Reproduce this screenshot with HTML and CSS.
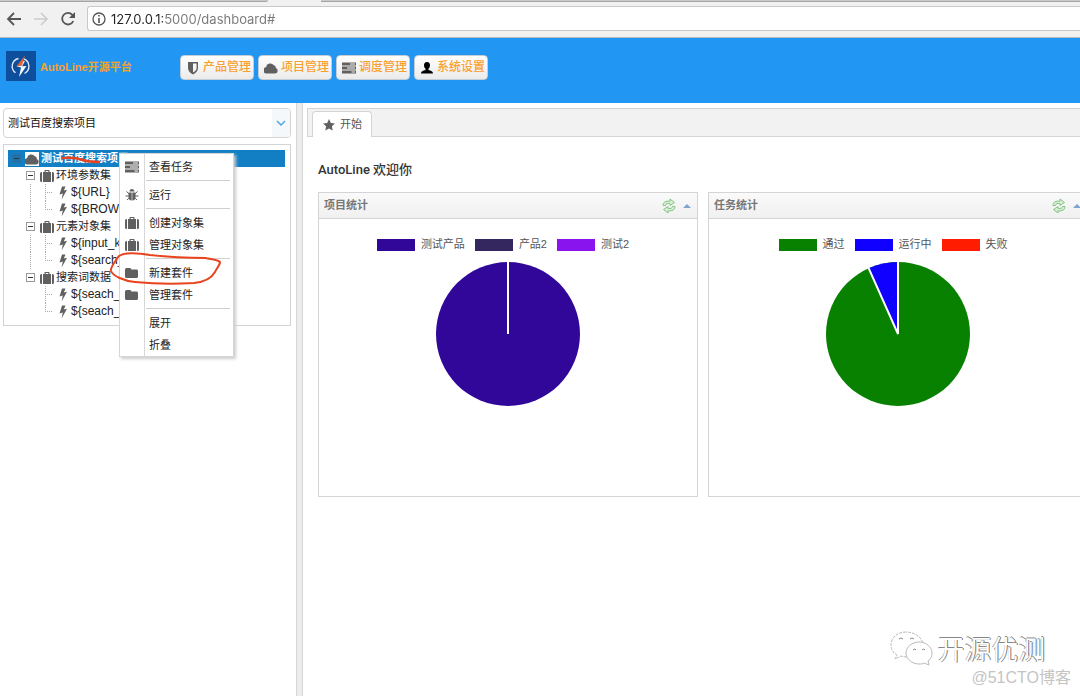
FILE: index.html
```html
<!DOCTYPE html>
<html lang="zh-CN">
<head>
<meta charset="utf-8">
<title>AutoLine开源平台</title>
<link rel="stylesheet" href="styles.css">
</head>
<body>
<svg class="defs" aria-hidden="true">
  <symbol id="i-shield" viewBox="0 0 14 14"><path fill-rule="evenodd" d="M2 1h10v6c0 3-2 5-5 6.500C4 12 2 10 2 7zM7 2.500V11.500c2.500-1.200 3.600-2.700 3.600-4.500V2.500z"/></symbol>
  <symbol id="i-cloud" viewBox="0 0 14 14"><path d="M3.200 12.500a3.200 3.200 0 0 1-1.200-6.300A4.300 4.300 0 0 1 9.800 4.300a2.600 2.600 0 0 1 2 2.800 2.800 2.800 0 0 1-.4 5.400z"/></symbol>
  <symbol id="i-tasks" viewBox="0 0 14 14"><path fill-rule="evenodd" d="M0 1.500h14v3H0zM8 2.500v1h5v-1zM0 5.500h14v3H0zM5 6.500v1h8v-1zM0 9.500h14v3H0zM9.500 10.500v1H13v-1z"/></symbol>
  <symbol id="i-user" viewBox="0 0 14 14"><path d="M7 1c2 0 3.100 1.300 3 3.200C9.900 6 9.300 7 8.500 7.700V9c2.500.7 4.500 1.300 4.500 3.500H1C1 10.300 3 9.700 5.500 9V7.700C4.700 7 4.100 6 4 4.200 3.900 2.300 5 1 7 1z"/></symbol>
  <symbol id="i-case" viewBox="0 0 14 14"><path fill-rule="evenodd" d="M4.500 3V1.600q0-.6.600-.6h3.800q.6 0 .6.600V3H11v10H3V3zM5.700 3h2.600V2H5.700zM0 4.500Q0 3 1.500 3H2v10h-.5Q0 13 0 11.500zM12 3h.5Q14 3 14 4.500v7q0 1.500-1.500 1.500H12z"/></symbol>
  <symbol id="i-bolt" viewBox="0 0 10 14"><path d="M4 0.500h3.500L5.800 4.500 9 3.700 3.600 13.500 4.800 7.500 1.500 8.400z"/></symbol>
  <symbol id="i-bug" viewBox="0 0 14 14"><path d="M4.500 3.500a2.500 2.500 0 0 1 5 0zM4 4.500h2.700v8C4.500 12.500 3.500 11 3.500 9V5zM7.300 4.500H10l.5.500v4c0 2-1 3.500-3.200 3.500z"/><path d="M1.500 3.500 4 5.700M12.500 3.500 10 5.700M.5 8H4M13.500 8H10M2 12l2.200-2M12 12l-2.200-2" fill="none" stroke="currentColor"/></symbol>
  <symbol id="i-folder" viewBox="0 0 14 14"><path d="M0 3.500Q0 2 1.500 2H5q1.300 0 1.300 1.600h5.200Q13 3.600 13 5v5.500q0 1.500-1.500 1.500h-10Q0 12 0 10.500z"/></symbol>
  <symbol id="i-star" viewBox="0 0 14 14"><path d="m7 1 1.800 3.900 4.200.5-3.100 2.900.8 4.200L7 10.400l-3.700 2.100.8-4.200L1 5.400l4.200-.5z"/></symbol>
  <symbol id="i-refresh" viewBox="0 0 16 16"><path d="M2 7.500C2 4 5 2.700 9 3.200V1l4.500 3.500L9 7.500V5.700C6 5.200 5 5.700 4.500 7.500zM14 8.500c0 3.500-3 4.800-7 4.300V15l-4.500-3.500L7 8.500v1.800c3 .5 4 0 4.500-1.800z" fill="#d5efd2" stroke="#7dbd7a" stroke-width=".9"/></symbol>
</svg>

<div class="chrome">
  <div class="tabstrip"><span class="tabs-left"></span><span class="tabs-right"></span></div>
  <div class="toolbar">
    <button class="nav" aria-label="后退"><svg viewBox="0 0 16 16"><path d="M15 8H2M8 2 2 8l6 6" fill="none" stroke="#555" stroke-width="1.800"/></svg></button>
    <button class="nav" aria-label="前进"><svg viewBox="0 0 16 16"><path d="M1 8h13M8 2l6 6-6 6" fill="none" stroke="#ccc" stroke-width="1.600"/></svg></button>
    <button class="nav" aria-label="刷新"><svg viewBox="0 0 16 16"><path d="M13.300 10a5.800 5.800 0 1 1-1-6.200l1.500 1.700" fill="none" stroke="#555" stroke-width="1.800"/><path d="M15 1v6H9z" fill="#555"/></svg></button>
    <div class="address">
      <svg class="info" viewBox="0 0 14 14"><circle cx="7" cy="7" r="6" fill="none" stroke="#555" stroke-width="1.300"/><path d="M6.200 3h1.600v1.600H6.200zM6.200 6h1.600v5H6.200z" fill="#555"/></svg>
      <input class="url" type="text" aria-label="地址" value="127.0.0.1:5000/dashboard#">
    </div>
  </div>
</div>

<header class="header">
  <svg class="logo" viewBox="0 0 30 30"><rect width="30" height="30" fill="#0d4f9c"/><path d="M12.500 7.500a8 8 0 0 0-3 14.300M18 8a8 8 0 0 1 .5 14.500" fill="none" stroke="#dbe8f7" stroke-width="1.400"/><path d="m16 10-1 4.500-4.500.7 4.500 1.300L13 26l7.500-11-4.500.300 3-5z" fill="#f3f6fb"/><path d="M19 4.500 10.500 15.200l5.500-.8z" fill="#e8622f"/></svg>
  <span class="brand">AutoLine开源平台</span>
  <nav class="menubar">
    <button class="pill"><svg class="icon"><use href="#i-shield"/></svg>产品管理</button>
    <button class="pill"><svg class="icon"><use href="#i-cloud"/></svg>项目管理</button>
    <button class="pill"><svg class="icon"><use href="#i-tasks"/></svg>调度管理</button>
    <button class="pill"><svg class="icon black"><use href="#i-user"/></svg>系统设置</button>
  </nav>
</header>

<div class="workspace">
  <aside class="sidebar">
    <div class="combo">
      <select aria-label="项目"><option>测试百度搜索项目</option></select>
      <span class="combo-arrow"><svg viewBox="0 0 10 6"><path d="m1 1 4 4 4-4" fill="none" stroke="#4aa3e0" stroke-width="1.400"/></svg></span>
    </div>
    <ul class="tree">
      <li class="row selected"><span class="toggle"></span><svg class="icon boxed"><use href="#i-cloud"/></svg>测试百度搜索项目</li>
      <li class="row group"><span class="toggle"></span><svg class="icon"><use href="#i-case"/></svg>环境参数集</li>
      <li class="row leaf"><span class="branch"></span><svg class="icon"><use href="#i-bolt"/></svg>${URL}</li>
      <li class="row leaf last"><span class="branch"></span><svg class="icon"><use href="#i-bolt"/></svg>${BROWSER}</li>
      <li class="row group"><span class="toggle"></span><svg class="icon"><use href="#i-case"/></svg>元素对象集</li>
      <li class="row leaf"><span class="branch"></span><svg class="icon"><use href="#i-bolt"/></svg>${input_kw}</li>
      <li class="row leaf last"><span class="branch"></span><svg class="icon"><use href="#i-bolt"/></svg>${search_btn}</li>
      <li class="row group end"><span class="toggle"></span><svg class="icon"><use href="#i-case"/></svg>搜索词数据</li>
      <li class="row leaf end"><span class="branch"></span><svg class="icon"><use href="#i-bolt"/></svg>${seach_a}</li>
      <li class="row leaf last end"><span class="branch"></span><svg class="icon"><use href="#i-bolt"/></svg>${seach_b}</li>
    </ul>
  </aside>
  <div class="splitter"></div>
  <main class="main">
    <div class="tabs"><button class="tab"><svg class="icon"><use href="#i-star"/></svg>开始</button></div>
    <div class="content">
      <h1>AutoLine 欢迎你</h1>
      <div class="panels">
        <section class="panel">
          <div class="panel-head"><h2>项目统计</h2><button aria-label="刷新"><svg class="refresh"><use href="#i-refresh"/></svg></button><button aria-label="收起"><span class="up"></span></button></div>
          <div class="chart">
            <div class="legend"><span class="key"><i class="indigo"></i>测试产品</span><span class="key"><i class="dark"></i>产品2</span><span class="key"><i class="violet"></i>测试2</span></div>
            <svg class="pie" viewBox="0 0 146 146"><circle cx="73" cy="73" r="72" fill="#300799"/><path d="M73 0v73" stroke="#fff" stroke-width="2"/></svg>
          </div>
        </section>
        <section class="panel">
          <div class="panel-head"><h2>任务统计</h2><button aria-label="刷新"><svg class="refresh"><use href="#i-refresh"/></svg></button><button aria-label="收起"><span class="up"></span></button></div>
          <div class="chart">
            <div class="legend"><span class="key"><i class="green"></i>通过</span><span class="key"><i class="blue"></i>运行中</span><span class="key"><i class="red"></i>失败</span></div>
            <svg class="pie" viewBox="0 0 146 146"><circle cx="73" cy="73" r="72" fill="#088000"/><path d="M73 73V1A72 72 0 0 0 43.700 7.200z" fill="#1000ff"/><path d="M73 0v73L43.300 6.300" fill="none" stroke="#fff" stroke-width="2"/></svg>
          </div>
        </section>
      </div>
    </div>
  </main>
</div>

<div class="context" role="menu">
  <button role="menuitem"><svg class="icon"><use href="#i-tasks"/></svg>查看任务</button>
  <hr>
  <button role="menuitem"><svg class="icon"><use href="#i-bug"/></svg>运行</button>
  <hr>
  <button role="menuitem"><svg class="icon"><use href="#i-case"/></svg>创建对象集</button>
  <button role="menuitem"><svg class="icon"><use href="#i-case"/></svg>管理对象集</button>
  <hr>
  <button role="menuitem"><svg class="icon"><use href="#i-folder"/></svg>新建套件</button>
  <button role="menuitem"><svg class="icon"><use href="#i-folder"/></svg>管理套件</button>
  <hr>
  <button role="menuitem"><span class="icon"></span>展开</button>
  <button role="menuitem"><span class="icon"></span>折叠</button>
</div>

<svg class="marks" viewBox="0 0 240 150" aria-hidden="true">
  <g fill="none" stroke="#e8431c" stroke-linecap="round" stroke-linejoin="round">
    <path d="M63 18c9-1 14 0 20 2s11 2 16 2" stroke-width="2.500"/>
    <path d="M206 118C190 118 168 117 150 115 138 113 122 112 118 117 116 121 110 127 111 131 113 136 124 141 135 142 155 144 178 144 194 143 204 142 211 139 215 132 217 128 220 125 220 122 218 120 212 119 205 118" stroke-width="2"/>
  </g>
</svg>

<div class="watermark">
  <div class="account">
    <svg viewBox="0 0 44 38"><g fill="#fff" stroke="#bbb" stroke-width="1"><path d="M17 2C8 2 2 8 2 15c0 4 2 8 6 10l-2 4 6-3c2 1 5 1 7 1 8 0 15-5 15-12S26 2 17 2z" stroke-dasharray="3 1"/><path d="M30 12c-7 0-13 5-13 11s6 11 13 11c2 0 4 0 5-1l5 2-1-4c3-2 4-5 4-8 0-6-6-11-13-11z"/></g><path d="M10 9q2-2 4 0M21 9q2-2 4 0M24 20q2-2 3 0M33 20q2-2 3 0" fill="none" stroke="#888"/></svg>
    <span>开源优测</span>
  </div>
  <div class="site">@51CTO博客</div>
</div>
</body>
</html>
```

FILE: styles.css
```css
* { box-sizing: border-box; }
body {
  margin: 0;
  height: 100vh;
  display: flex;
  flex-direction: column;
  position: relative;
  overflow: hidden;
  background: #fff;
  color: #222;
  font: 11px/17px "Liberation Sans", "Noto Sans CJK SC", sans-serif;
}
button { border: 0; padding: 0; background: none; font: inherit; color: inherit; }
.defs { display: none; }
.icon { width: 14px; height: 14px; flex: none; fill: #606060; color: #606060; }
.icon.black { fill: #000; }

/* Browser frame */
.chrome { background: #f1f1f2; border-bottom: 1px solid #b4bcc2; }
.tabstrip { display: flex; gap: 53px; height: 2px; }
.tabstrip span { background: #c9c9c9; border-bottom: 1px solid #a5a5a5; }
.tabs-left { flex: 0 0 268px; border-radius: 0 0 3px 0; }
.tabs-right { flex: 1; }
.toolbar { display: flex; align-items: center; gap: 11px; padding: 4px 0 6px 6px; }
.nav { width: 16px; height: 16px; }
.nav svg { display: block; width: 16px; height: 16px; }
.address {
  flex: 1;
  display: flex;
  align-items: center;
  gap: 5px;
  height: 25px;
  padding-left: 4px;
  background: #fff;
  border: 1px solid #c9c9c9;
  border-right: 0;
  border-radius: 3px 0 0 3px;
}
.info { width: 14px; height: 14px; }
.url {
  flex: 1;
  border: 0;
  padding: 0;
  outline: 0;
  font: 13px/20px Inter, sans-serif;
  color: transparent;
  background: linear-gradient(90deg, #222 52px, #777 52px);
  background-clip: text;
  -webkit-background-clip: text;
}

/* Application header */
.header {
  display: flex;
  align-items: center;
  height: 65px;
  padding: 0 6px 10px;
  background: #2196f3;
  color: #f9a12e;
  font-size: 12px;
  font-weight: 500;
}
.logo { width: 30px; height: 30px; }
.brand { width: 144px; padding: 3px 0 0 4px; font-size: 11px; font-weight: bold; }
.menubar { display: flex; gap: 4px; padding-top: 4px; }
.pill {
  display: flex;
  align-items: center;
  gap: 3px;
  height: 25px;
  width: 74px;
  padding: 0 0 0 5px;
  white-space: nowrap;
  border: 1px solid #c5cdd4;
  border-radius: 4px;
  background: linear-gradient(#fff, #ebebeb);
}

/* Project tree */
.workspace { flex: 1; display: flex; min-height: 0; }
.sidebar { flex: 0 0 296px; padding: 5px 5px 0 3px; }
.combo { position: relative; margin-bottom: 6px; }
.combo select {
  display: block;
  width: 100%;
  height: 30px;
  padding: 0 4px;
  appearance: none;
  border: 1px solid #d4d4d4;
  border-radius: 4px;
  background: #fff;
  color: #111;
  font: inherit;
}
.combo-arrow {
  position: absolute;
  top: 1px;
  right: 1px;
  bottom: 1px;
  width: 18px;
  display: grid;
  place-items: center;
  border-radius: 0 3px 3px 0;
  background: #f5f8fa;
  pointer-events: none;
}
.combo-arrow svg { width: 10px; height: 6px; }
.tree { margin: 0; padding: 5px 5px 5px 4px; list-style: none; border: 1px solid #d4d4d4; }
.row { display: flex; align-items: center; height: 17px; gap: 2px; white-space: nowrap; }
.row.selected { padding-left: 4px; background: #127fc4; color: #fff; font-weight: bold; }
.boxed { background: #fff; margin-left: 2px; }
.toggle { flex: none; width: 9px; height: 9px; border: 1px solid #999; background: linear-gradient(#333, #333) center / 5px 1px no-repeat #fff; }
.selected .toggle { border-color: #2a6fa0; background-color: #1b74b0; }
.group { padding-left: 18px; }
.group .toggle { margin-right: 3px; }
.leaf { padding-left: 22px; font-size: 12px; background: repeating-linear-gradient(#aaa 0 1px, #fff 1px 2px) 22px 0 / 1px 100% no-repeat; }
.leaf.end { background: none; }
.branch { flex: none; width: 8px; height: 17px; margin-left: 15px; margin-right: 2px; background: repeating-linear-gradient(90deg, #aaa 0 1px, #fff 1px 2px) 0 8px / 8px 1px no-repeat, repeating-linear-gradient(#aaa 0 1px, #fff 1px 2px) 0 0 / 1px 100% no-repeat; }
.last .branch { background-size: 8px 1px, 1px 9px; }
.leaf .icon { width: 12px; }
.splitter { flex: 0 0 7px; background: #ececec; border: solid #d6d6d6; border-width: 0 1px; }

/* Dashboard */
.main { flex: 1; min-width: 0; overflow: hidden; padding: 5px 0 0 4px; }
.tabs { display: flex; align-items: flex-end; height: 29px; padding-left: 4px; background: #f2f2f2; border: 1px solid #d4d4d4; border-right: 0; }
.tab {
  display: flex;
  align-items: center;
  gap: 4px;
  height: 26px;
  margin-bottom: -1px;
  padding: 0 9px;
  border: 1px solid #d4d4d4;
  border-bottom: 0;
  border-radius: 4px 4px 0 0;
  background: #fff;
  color: #555;
}
.content { padding: 22px 0 0 11px; }
h1 { margin: 0 0 11px; font: 500 13px/22px Roboto, "Noto Sans CJK SC", sans-serif; color: #333; }
.panels { display: flex; gap: 10px; }
.panel { flex: 0 0 380px; min-height: 305px; border: 1px solid #d4d4d4; }
.panel-head { display: flex; align-items: center; gap: 3px; height: 26px; padding: 0 6px 0 5px; border-bottom: 1px solid #d4d4d4; background: linear-gradient(#fafafa, #f0f0f0); }
.panel-head h2 { flex: 1; margin: 0; font-size: 11px; color: #777; }
.refresh { display: block; width: 16px; height: 16px; }
.up { display: block; border: solid transparent; border-width: 0 4px 4px; border-bottom-color: #7fa3cf; margin-left: 3px; }
.chart { display: flex; flex-direction: column; align-items: center; gap: 8px; padding-top: 17px; }
.legend { display: flex; gap: 10px; padding-right: 10px; color: #555; }
.key { display: flex; align-items: center; gap: 6px; }
.key i { width: 38px; height: 12px; }
.indigo { background: #300799; }
.dark { background: #34265f; }
.violet { background: #8a14ee; }
.green { background: #088000; }
.blue { background: #1000ff; }
.red { background: #ff1c00; }
.pie { width: 146px; height: 146px; }

/* Context menu over the tree */
.context {
  position: absolute;
  left: 119px;
  top: 153px;
  width: 115px;
  padding: 2px 1px 0;
  border: 1px solid #d6d6d6;
  background: linear-gradient(#d8d8d8, #d8d8d8) 24px 0 / 1px 100% no-repeat #fff;
  box-shadow: 2px 2px 3px #ccc;
}
.context button { display: flex; align-items: center; gap: 10px; width: 100%; height: 22px; padding-left: 4px; text-align: left; }
.context hr { height: 1px; margin: 2px 2px 3px 25px; border: 0; background: #d0d0d0; }

.marks { position: absolute; left: 0; top: 140px; width: 240px; height: 150px; pointer-events: none; }

.watermark { position: absolute; right: 9px; bottom: 8px; text-align: right; }
.account { display: flex; align-items: center; gap: 4px; padding-right: 26px; font: 27px/38px "Noto Sans CJK SC", sans-serif; color: #fff; text-shadow: 1px 0 0 #777, 0 -1px 0 #888; }
.account svg { width: 44px; height: 38px; }
.site { font-size: 16px; line-height: 20px; color: #c4c4c4; }
```
